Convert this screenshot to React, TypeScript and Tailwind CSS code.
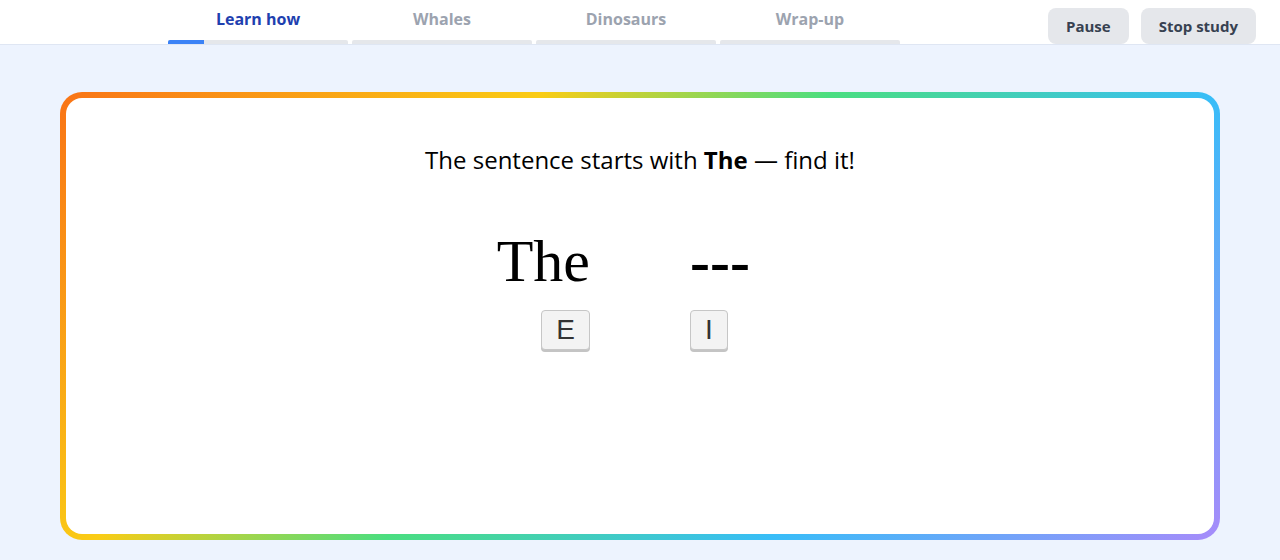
import React from "react";

const tabs = ["Learn how", "Whales", "Dinosaurs", "Wrap-up"];

export default function App() {
  return (
    <div className="w-[1280px] h-[560px] bg-[#edf3fe] flex flex-col overflow-hidden" style={{ fontFamily: '"Open Sans", "Noto Sans", sans-serif' }}>
      <header className="h-[45px] bg-white border-b border-[#dfe6f3] flex items-end pl-[168px] pr-6 shrink-0">
        <nav className="flex gap-1 h-[44px]">
          {tabs.map((t, i) => (
            <div key={t} className="w-[180px] flex flex-col">
              <div className={`flex-1 flex items-center justify-center text-[16px] font-bold pb-[3px] ${i === 0 ? "text-[#1e40af]" : "text-[#9ca3af]"}`}>
                {t}
              </div>
              <div className="h-1 bg-[#e5e7eb] rounded-t-[2px] overflow-hidden">
                {i === 0 && <div className="h-full w-[36px] bg-[#3b82f6]" />}
              </div>
            </div>
          ))}
        </nav>
        <div className="ml-auto flex gap-3 h-[44px] items-end">
          <button className="h-[36px] px-[18px] rounded-lg bg-[#e5e7eb] text-[#374151] text-[15px] font-bold">Pause</button>
          <button className="h-[36px] px-[18px] rounded-lg bg-[#e5e7eb] text-[#374151] text-[15px] font-bold">Stop study</button>
        </div>
      </header>
      <main className="flex-1 px-[60px] pt-[47px] pb-[20px]">
        <div className="h-full rounded-[22px] p-[6px] bg-[linear-gradient(135deg,#f97316,#facc15_30%,#4ade80_48%,#38bdf8_72%,#a78bfa)]">
          <div className="h-full bg-white rounded-[16px] flex flex-col items-center pt-[46px]">
            <p className="text-[24px] leading-[32px] text-black">
              The sentence starts with <b>The</b> — find it!
            </p>
            <div className="mt-[55px] grid grid-cols-[92px_92px] gap-x-[100px]">
              <div className="flex flex-col items-end">
                <span className="text-[60px] leading-[60px] text-black whitespace-nowrap" style={{ fontFamily: '"Liberation Serif", "Times New Roman", serif' }}>The</span>
              </div>
              <div className="flex flex-col items-start">
                <span className="text-[60px] leading-[60px] font-bold text-black whitespace-nowrap" style={{ fontFamily: '"Liberation Serif", "Times New Roman", serif' }}>---</span>
              </div>
              <div className="flex justify-end mt-[19px]">
                <button className="h-[40px] w-[49px] rounded-[4px] border border-[#c6c6c6] bg-[#f3f3f3] shadow-[0_2px_0_#c4c4c4] text-[28px] leading-none text-[#333] flex items-center justify-center" style={{ fontFamily: '"Liberation Sans", Arial, sans-serif' }}>E</button>
              </div>
              <div className="flex justify-start mt-[19px]">
                <button className="h-[40px] w-[38px] rounded-[4px] border border-[#c6c6c6] bg-[#f3f3f3] shadow-[0_2px_0_#c4c4c4] text-[28px] leading-none text-[#333] flex items-center justify-center" style={{ fontFamily: '"Liberation Sans", Arial, sans-serif' }}>I</button>
              </div>
            </div>
          </div>
        </div>
      </main>
    </div>
  );
}
